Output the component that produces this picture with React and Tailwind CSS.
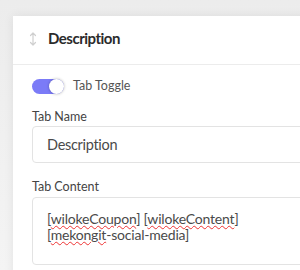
export default function App() {
  const wavy = "underline decoration-wavy decoration-[#e33] decoration-1 underline-offset-[1px]";
  return (
    <div className="w-[300px] h-[270px] overflow-hidden bg-gradient-to-b from-[#ececec] to-[#f4f4f4] pt-4 pl-[13px] font-['Lato',sans-serif]">
      <div className="w-[330px] h-[300px] bg-white shadow-[0_0_10px_rgba(0,0,0,0.07)]">
        <div className="h-[49px] flex items-center gap-[11px] pl-[16px] pb-[3px] border-b border-[#ececec]">
          <svg width="8" height="14" viewBox="0 0 8 14" fill="none" stroke="#cfcfcf" strokeWidth="1.2" strokeLinecap="round" strokeLinejoin="round">
            <path d="M4 1v12M1.5 3.5L4 1l2.5 2.5M1.5 10.5L4 13l2.5-2.5" />
          </svg>
          <span className="text-[15px] font-bold tracking-[-0.5px] text-[#2b2b2b]">Description</span>
        </div>
        <div className="px-[19px] pt-[13px]">
          <div className="flex items-center gap-[9px]">
            <div className="w-8 h-[15px] rounded-full bg-[#7b7bf7] relative">
              <div className="absolute right-0 top-0 w-[15px] h-[15px] rounded-full bg-white shadow-[0_0_3px_rgba(0,0,0,0.3)]" />
            </div>
            <span className="text-[12.5px] leading-4 text-[#555]">Tab Toggle</span>
          </div>
          <div className="mt-[15px] text-[12.5px] text-[#444] leading-[16px]">Tab Name</div>
          <div className="mt-px h-[37px] border border-[#e3e3e3] rounded-[4px] flex items-center pl-[14px] text-[14.5px] tracking-[-0.3px] text-[#4a4a4a]">
            Description
          </div>
          <div className="mt-[16px] text-[12.5px] text-[#444] leading-[16px]">Tab Content</div>
          <div className="mt-[2px] h-[68px] border border-[#e3e3e3] rounded-[4px] pl-[14px] pt-[13px] text-[14px] tracking-[-0.2px] text-[#4a4a4a] leading-[16px]">
            [<span className={wavy}>wilokeCoupon</span>] [<span className={wavy}>wilokeContent</span>]
            <br />
            [<span className={wavy}>mekongit</span>-social-media]
          </div>
        </div>
      </div>
    </div>
  );
}
